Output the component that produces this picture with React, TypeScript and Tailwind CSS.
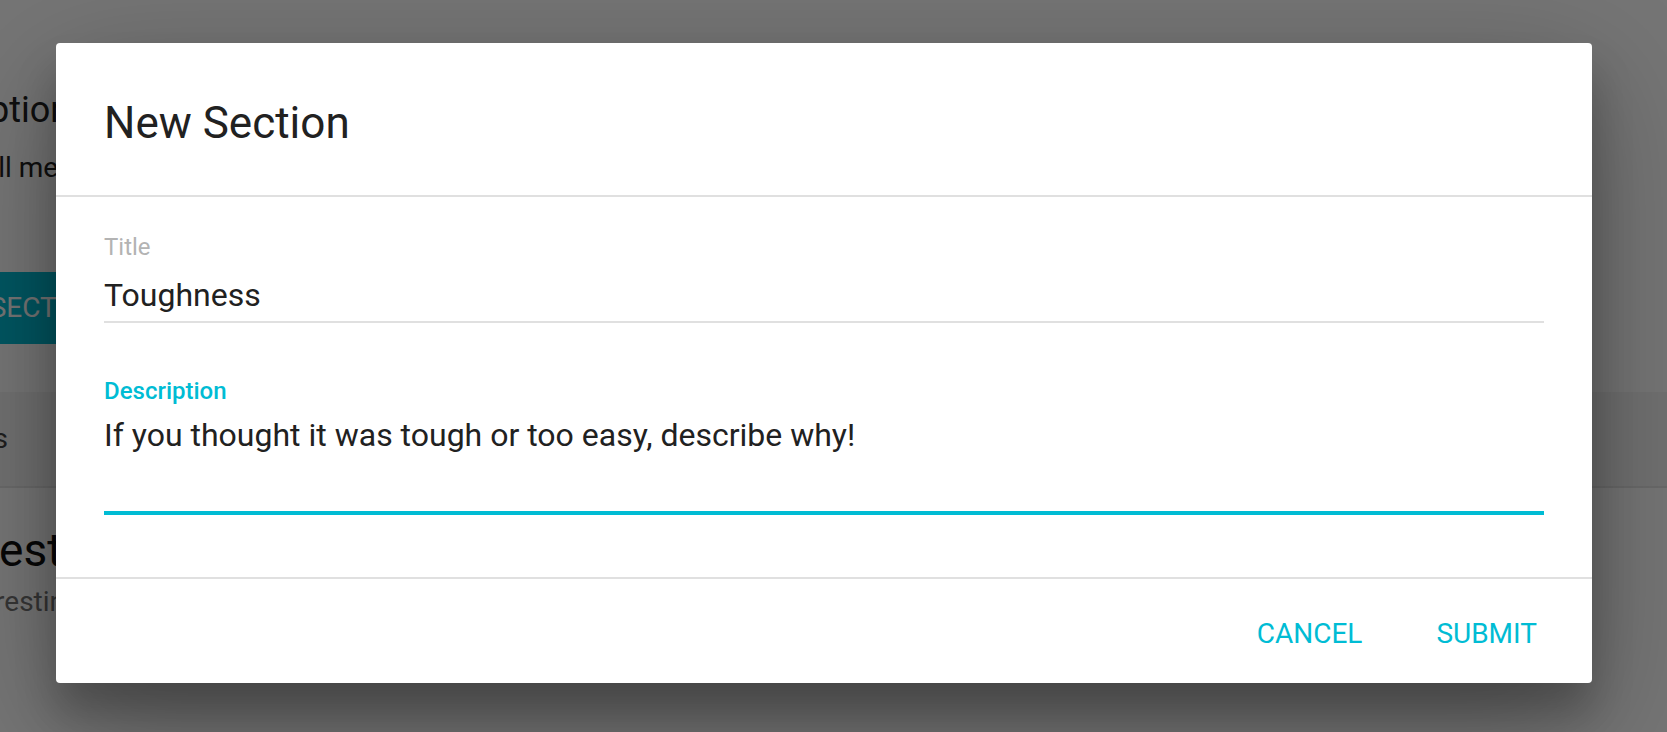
import { useState } from "react";

// Page that sits behind the modal (mostly hidden by the dialog + overlay)
function BackgroundPage() {
  return (
    <div className="flex flex-col">
      <div className="h-[392px] overflow-hidden bg-white pt-[86px] shadow-[0_2px_4px_rgba(0,0,0,0.18)]">
        <div className="-ml-[112px] whitespace-nowrap text-[36px] leading-[48px] text-[#212121]">
          Description
        </div>
        <div className="-ml-[32px] mt-[16px] whitespace-nowrap text-[28px] leading-[36px] text-[#212121]">
          Tell me about this section
        </div>
        <div className="-ml-[110px] mt-[86px] flex h-[72px] w-[420px] items-center bg-[#00bcd4] px-[32px] text-[28px] whitespace-nowrap text-white">
          NEW SECTION
        </div>
      </div>
      <div className="flex h-[96px] items-center overflow-hidden border-b-2 border-[#e4e4e4] bg-[#f4f4f4]">
        <div className="-ml-[100px] whitespace-nowrap text-[28px] text-[#424242]">
          Sections
        </div>
      </div>
      <div className="overflow-hidden bg-white pt-[34px]">
        <div className="-ml-[58px] whitespace-nowrap text-[46px] leading-[56px] text-[#111111]">
          Questions
        </div>
        <div className="-ml-[52px] mt-[6px] whitespace-nowrap text-[28px] leading-[36px] text-[#757575]">
          Interesting questions
        </div>
        <div className="h-[200px]" />
      </div>
    </div>
  );
}

export default function App() {
  const [title, setTitle] = useState("Toughness");
  const [description, setDescription] = useState(
    "If you thought it was tough or too easy, describe why!"
  );

  return (
    <div className="relative h-[732px] w-full overflow-hidden bg-white font-['Roboto',sans-serif]">
      <BackgroundPage />

      {/* overlay */}
      <div className="absolute inset-0 bg-black/[0.54]" />

      {/* dialog */}
      <div className="absolute inset-0 flex items-start pl-[56px] pt-[43px]">
        <div className="flex h-[640px] w-[1536px] flex-col rounded-[4px] bg-white shadow-[0_38px_120px_rgba(0,0,0,0.3),0_30px_40px_rgba(0,0,0,0.22)]">
          <div className="border-b-2 border-[#e0e0e0] px-[48px] pt-[48px] pb-[40px] text-[44px] leading-[64px] text-[#212121]">
            New Section
          </div>

          <div className="flex h-[382px] flex-col border-b-2 border-[#e0e0e0] px-[48px]">
            <label className="mt-[36px] text-[24px] leading-[28px] text-[#b3b3b3]">
              Title
            </label>
            <input
              type="text"
              value={title}
              onChange={(e) => setTitle(e.target.value)}
              className="mt-[14px] h-[40px] w-full bg-transparent p-0 text-[32px] leading-[40px] text-[#212121] outline-none"
            />
            <div className="mt-[6px] h-[2px] bg-[#e0e0e0]" />

            <label className="mt-[54px] text-[24px] leading-[28px] font-medium text-[#00bcd4]">
              Description
            </label>
            <textarea
              value={description}
              onChange={(e) => setDescription(e.target.value)}
              rows={2}
              className="mt-[10px] h-[80px] w-full resize-none bg-transparent p-0 text-[32px] leading-[40px] text-[#212121] outline-none"
            />
            <div className="mt-[16px] h-[4px] bg-[#00bcd4]" />
          </div>

          <div className="flex flex-1 items-start justify-end gap-[10px] pt-[19px] pr-[23px]">
            <button className="h-[72px] rounded-[4px] px-[32px] text-[28px] leading-[72px] text-[#00bcd4] uppercase">
              Cancel
            </button>
            <button className="h-[72px] rounded-[4px] px-[32px] text-[28px] leading-[72px] text-[#00bcd4] uppercase">
              Submit
            </button>
          </div>
        </div>
      </div>
    </div>
  );
}
